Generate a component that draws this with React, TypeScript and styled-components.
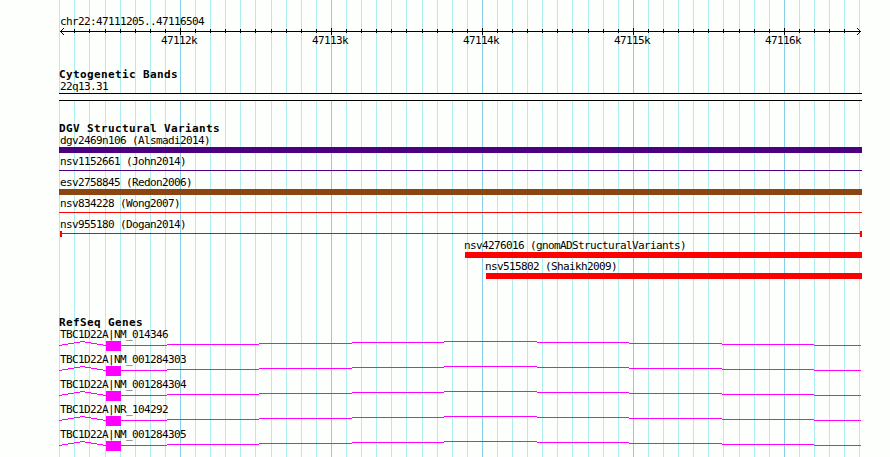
import React from "react";
import styled, { createGlobalStyle } from "styled-components";

const START = 47111200;
const LEFT = 59;
const WIDTH = 803;
const PX_PER_BP = 800 / 5300;

const toX = (bp: number) => Math.floor(0.755 + (bp - START) * PX_PER_BP);

const gridLines = Array.from({ length: 54 }, (_, i) => {
    const bp = START + i * 100;
    return { x: toX(bp), major: bp % 1000 === 0 };
});

const tickLabels = ["47112k", "47113k", "47114k", "47115k", "47116k"];

type VariantT = {
    name: string;
    color: string;
    kind: "bar" | "line" | "capped";
    offset?: number;
};

const variants: VariantT[] = [
    { name: "dgv2469n106 (Alsmadi2014)", color: "#4b0082", kind: "bar" },
    { name: "nsv1152661 (John2014)", color: "#4b0082", kind: "line" },
    { name: "esv2758845 (Redon2006)", color: "#8b4513", kind: "bar" },
    { name: "nsv834228 (Wong2007)", color: "#ff0000", kind: "line" },
    { name: "nsv955180 (Dogan2014)", color: "#ff0000", kind: "capped" },
    { name: "nsv4276016 (gnomADStructuralVariants)", color: "#ff0000", kind: "bar", offset: 406 },
    { name: "nsv515802 (Shaikh2009)", color: "#ff0000", kind: "bar", offset: 427 },
];

const genes = [
    "TBC1D22A|NM_014346",
    "TBC1D22A|NM_001284303",
    "TBC1D22A|NM_001284304",
    "TBC1D22A|NR_104292",
    "TBC1D22A|NM_001284305",
];

// [start, end, y] runs of the two introns around the exon
const intronRuns = [
    [0, 3, 4],
    [3, 9, 3],
    [9, 15, 2],
    [15, 21, 1],
    [21, 26, 0],
    [26, 32, 1],
    [32, 38, 2],
    [38, 44, 3],
    [44, 47, 4],
    [62, 108, 4],
    [108, 200, 3],
    [200, 293, 2],
    [293, 385, 1],
    [385, 478, 0],
    [478, 570, 1],
    [570, 663, 2],
    [663, 755, 3],
    [755, 802, 4],
];

const Grid = () => (
    <GridLayer width={WIDTH} height={457} shapeRendering="crispEdges">
        {gridLines.map(({ x, major }) => (
            <rect key={x} x={x} y={0} width={1} height={457} fill={major ? "#87ceeb" : "#afeeee"} />
        ))}
    </GridLayer>
);

const Ruler = () => (
    <Drawing width={WIDTH} height={7} shapeRendering="crispEdges">
        <rect x={1} y={3} width={801} height={1} />
        {gridLines.slice(1, -1).map(({ x, major }) => (
            <rect key={x} x={x} y={major ? 0 : 1} width={1} height={major ? 7 : 4} />
        ))}
        {[1, 2, 3].map((d) => (
            <React.Fragment key={d}>
                <rect x={1 + d} y={3 - d} width={1} height={1} />
                <rect x={1 + d} y={3 + d} width={1} height={1} />
                <rect x={801 - d} y={3 - d} width={1} height={1} />
                <rect x={801 - d} y={3 + d} width={1} height={1} />
            </React.Fragment>
        ))}
    </Drawing>
);

const Variant = ({ name, color, kind, offset = 0 }: VariantT) => (
    <VariantRow $offset={offset}>
        <Label>{name}</Label>
        <VariantGlyph $color={color} $kind={kind} />
    </VariantRow>
);

const Gene = ({ name }: { name: string }) => (
    <GeneRow>
        <Label>{name}</Label>
        <Drawing width={WIDTH} height={10} fill="#ff00ff" shapeRendering="crispEdges">
            {intronRuns.map(([from, to, y]) => (
                <rect key={from} x={from} y={y} width={to - from} height={1} />
            ))}
            <rect x={47} y={0} width={15} height={10} />
        </Drawing>
    </GeneRow>
);

const App = () => (
    <Browser>
        <GlobalStyle />
        <Grid />
        <Overview>
            <Label>chr22:47111205..47116504</Label>
            <Ruler />
            <TickLabels>
                {tickLabels.map((label) => (
                    <Label key={label}>{label}</Label>
                ))}
            </TickLabels>
        </Overview>
        <Track $gap={21}>
            <Heading>Cytogenetic Bands</Heading>
            <Label>22q13.31</Label>
            <Band />
        </Track>
        <Track $gap={35}>
            <Heading>DGV Structural Variants</Heading>
            {variants.map((variant) => (
                <Variant key={variant.name} {...variant} />
            ))}
        </Track>
        <Track $gap={0}>
            <Heading>RefSeq Genes</Heading>
            {genes.map((name) => (
                <Gene key={name} name={name} />
            ))}
        </Track>
    </Browser>
);

const GlobalStyle = createGlobalStyle`
    body {
        margin: 0;
        background: #fdfffc;
        overflow: hidden;
    }
`;

const Browser = styled.div`
    position: relative;
    box-sizing: border-box;
    width: 890px;
    height: 457px;
    padding: 15px 28px 0 ${LEFT}px;
    overflow: hidden;
    color: #000;
    font-family: "DejaVu Sans Mono", monospace;
`;

const GridLayer = styled.svg`
    position: absolute;
    top: 0;
    left: ${LEFT}px;
    z-index: -1;
`;

const Drawing = styled.svg`
    display: block;
    margin-top: 1px;
`;

const Overview = styled.div`
    height: 53px;
`;

const Label = styled.div`
    height: 12px;
    padding-left: 1px;
    font-size: 11px;
    line-height: 14px;
    letter-spacing: -0.622px;
    white-space: pre;
`;

const Heading = styled.div`
    height: 12px;
    font-size: 11px;
    font-weight: bold;
    line-height: 14px;
    letter-spacing: 0.378px;
    white-space: pre;
`;

const TickLabels = styled.div`
    display: grid;
    grid-template-columns: repeat(5, 151px);
    width: 700px;
    margin-top: -1px;
    padding-left: 101px;
`;

const Track = styled.section<{ $gap: number }>`
    margin-bottom: ${({ $gap }) => $gap}px;
`;

const Band = styled.div`
    box-sizing: border-box;
    height: 8px;
    margin-top: 1px;
    border: solid #000;
    border-width: 1px 0;
    background: #fdfffc;
`;

const VariantRow = styled.div<{ $offset: number }>`
    height: 21px;
    margin-left: ${({ $offset }) => $offset}px;

    ${Label} {
        margin-left: ${({ $offset }) => ($offset ? -2 : 0)}px;
    }
`;

const VariantGlyph = styled.div<{ $color: string; $kind: VariantT["kind"] }>`
    box-sizing: border-box;
    height: 6px;
    margin-top: 1px;
    padding: ${({ $kind }) => ($kind === "bar" ? 0 : "2px 0 3px")};
    border: solid ${({ $color }) => $color};
    border-width: ${({ $kind }) => ($kind === "capped" ? "0 2px" : 0)};
    margin-left: ${({ $kind }) => ($kind === "capped" ? 1 : 0)}px;
    background-color: ${({ $color }) => $color};
    background-clip: ${({ $kind }) => ($kind === "bar" ? "border-box" : "content-box")};
`;

const GeneRow = styled.div`
    height: 25px;
`;

export default App;
